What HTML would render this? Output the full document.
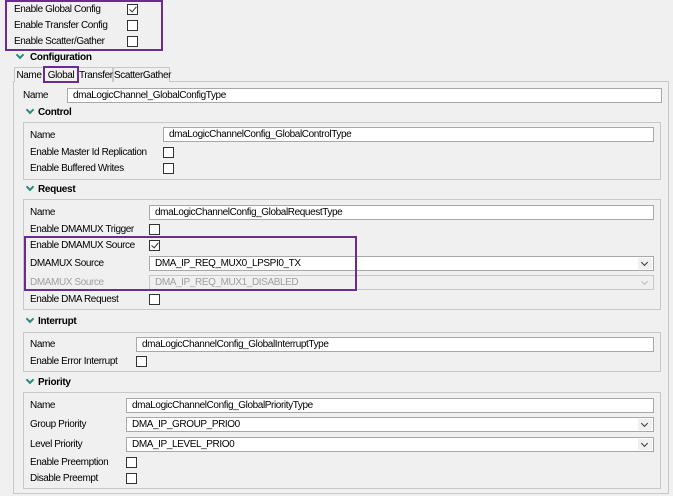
<!DOCTYPE html>
<html><head><style>
*{margin:0;padding:0;box-sizing:border-box}
body{width:673px;height:496px;background:#f0f0f0;position:relative;overflow:hidden;font-family:"Liberation Sans",sans-serif;font-size:10px;letter-spacing:-0.4px;color:#000}
div{position:absolute}
.t{line-height:14px;white-space:nowrap;margin-top:1px}
.b{font-weight:bold;letter-spacing:-0.3px}
.g{color:#a0a0a0}
.inp{background:#fff;border:1px solid #a8a8a8;height:15px;line-height:13px;padding-left:5px;white-space:nowrap}
.dis{background:#f0f0f0;color:#a0a0a0;border-color:#c8c8c8}
.cb{width:11px;height:11px;border:1px solid #333;background:#fff}
.grp{border:1px solid #c8c8c8}
.chev{width:6px;height:6px;border-right:2px solid #2a8a78;border-bottom:2px solid #2a8a78;transform:rotate(45deg)}
.dd{right:1px;top:1px;width:14px;height:11px;background:#f0f0f0}
.dd:after{content:"";position:absolute;left:4px;top:2px;width:4px;height:4px;border-right:1.5px solid #333;border-bottom:1.5px solid #333;transform:rotate(45deg)}
.dd.x:after{border-color:#bbb}
.tab{top:67px;height:15px;line-height:15px;border:1px solid #c8c8c8;border-bottom:none;text-align:center;background:#f0f0f0}
.ck:after{content:"";position:absolute;left:3px;top:0px;width:3px;height:6px;border-right:1px solid #333;border-bottom:1px solid #333;transform:rotate(40deg)}
.pb{border:2px solid #6a2c91}
</style></head><body>
<div class="t" style="left:14px;top:2px">Enable Global Config</div>
<div class="cb ck" style="left:127px;top:4px"></div>
<div class="t" style="left:14px;top:18px">Enable Transfer Config</div>
<div class="cb" style="left:127px;top:20px"></div>
<div class="t" style="left:14px;top:34px">Enable Scatter/Gather</div>
<div class="cb" style="left:127px;top:36px"></div>
<div class="pb" style="left:5px;top:0;width:158px;height:51px"></div>

<div class="chev" style="left:17px;top:52px"></div>
<div class="t b" style="left:30px;top:50px">Configuration</div>

<div style="left:13px;top:81px;width:656px;height:413px;border:1px solid #c8c8c8"></div>
<div class="tab" style="left:14px;width:30px">Name</div>
<div class="tab" style="left:44px;width:34px">Global</div>
<div class="tab" style="left:78px;width:35px">Transfer</div>
<div class="tab" style="left:113px;width:57px">ScatterGather</div>
<div class="pb" style="left:43px;top:66px;width:36px;height:17px"></div>

<div class="t" style="left:23px;top:88px">Name</div>
<div class="inp" style="left:67px;top:88px;width:595px">dmaLogicChannel_GlobalConfigType</div>

<div class="chev" style="left:27px;top:107px"></div>
<div class="t b" style="left:38px;top:105px">Control</div>
<div class="grp" style="left:23px;top:122px;width:638px;height:58px"></div>
<div class="t" style="left:30px;top:128px">Name</div>
<div class="inp" style="left:163px;top:127px;width:491px">dmaLogicChannelConfig_GlobalControlType</div>
<div class="t" style="left:30px;top:145px">Enable Master Id Replication</div>
<div class="cb" style="left:163px;top:147px"></div>
<div class="t" style="left:30px;top:161px">Enable Buffered Writes</div>
<div class="cb" style="left:163px;top:163px"></div>

<div class="chev" style="left:27px;top:184px"></div>
<div class="t b" style="left:38px;top:182px">Request</div>
<div class="grp" style="left:23px;top:199px;width:638px;height:111px"></div>
<div class="t" style="left:30px;top:205px">Name</div>
<div class="inp" style="left:149px;top:205px;width:505px">dmaLogicChannelConfig_GlobalRequestType</div>
<div class="t" style="left:30px;top:222px">Enable DMAMUX Trigger</div>
<div class="cb" style="left:149px;top:224px"></div>
<div class="t" style="left:30px;top:238px">Enable DMAMUX Source</div>
<div class="cb ck" style="left:149px;top:240px"></div>
<div class="t" style="left:30px;top:256px">DMAMUX Source</div>
<div class="inp" style="left:149px;top:256px;width:505px">DMA_IP_REQ_MUX0_LPSPI0_TX<div class="dd"></div></div>
<div class="t g" style="left:30px;top:275px">DMAMUX Source</div>
<div class="inp dis" style="left:149px;top:275px;width:505px">DMA_IP_REQ_MUX1_DISABLED<div class="dd x"></div></div>
<div class="t" style="left:30px;top:292px">Enable DMA Request</div>
<div class="cb" style="left:149px;top:294px"></div>
<div class="pb" style="left:24px;top:236px;width:333px;height:55px"></div>

<div class="chev" style="left:27px;top:316px"></div>
<div class="t b" style="left:38px;top:314px">Interrupt</div>
<div class="grp" style="left:23px;top:332px;width:638px;height:40px"></div>
<div class="t" style="left:30px;top:337px">Name</div>
<div class="inp" style="left:136px;top:337px;width:518px">dmaLogicChannelConfig_GlobalInterruptType</div>
<div class="t" style="left:30px;top:354px">Enable Error Interrupt</div>
<div class="cb" style="left:136px;top:356px"></div>

<div class="chev" style="left:27px;top:377px"></div>
<div class="t b" style="left:38px;top:375px">Priority</div>
<div class="grp" style="left:23px;top:392px;width:638px;height:97px"></div>
<div class="t" style="left:30px;top:398px">Name</div>
<div class="inp" style="left:126px;top:398px;width:528px">dmaLogicChannelConfig_GlobalPriorityType</div>
<div class="t" style="left:30px;top:417px">Group Priority</div>
<div class="inp" style="left:126px;top:417px;width:528px">DMA_IP_GROUP_PRIO0<div class="dd"></div></div>
<div class="t" style="left:30px;top:437px">Level Priority</div>
<div class="inp" style="left:126px;top:437px;width:528px">DMA_IP_LEVEL_PRIO0<div class="dd"></div></div>
<div class="t" style="left:30px;top:455px">Enable Preemption</div>
<div class="cb" style="left:126px;top:457px"></div>
<div class="t" style="left:30px;top:471px">Disable Preempt</div>
<div class="cb" style="left:126px;top:473px"></div>
</body></html>
